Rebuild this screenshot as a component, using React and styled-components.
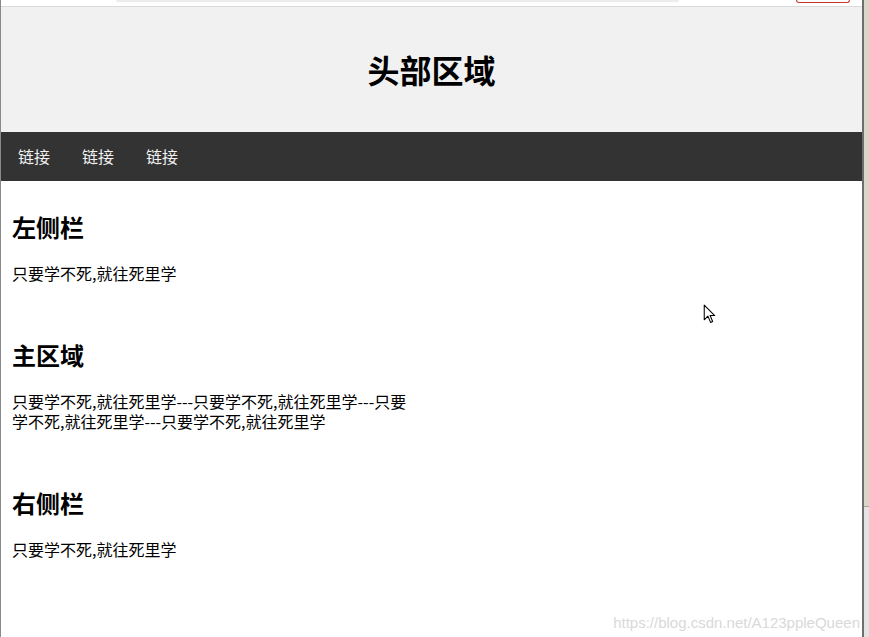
import React from 'react'
import styled, { createGlobalStyle } from 'styled-components'

const GlobalStyle = createGlobalStyle`
  html, body {
    margin: 0;
    padding: 0;
    background: #ffffff;
  }
  body {
    font-family: "Noto Sans CJK SC", "Liberation Sans", sans-serif;
    font-size: 16px;
    color: #000;
    overflow: hidden;
  }
`

const columns = [
  { title: '左侧栏', width: '25%', text: '只要学不死,就往死里学' },
  {
    title: '主区域',
    width: '50%',
    text: '只要学不死,就往死里学---只要学不死,就往死里学---只要学不死,就往死里学---只要学不死,就往死里学'
  },
  { title: '右侧栏', width: '25%', text: '只要学不死,就往死里学' }
]

const App = () => (
  <Screen>
    <GlobalStyle />
    <Window>
      <Chrome>
        <AddressBar />
        <RecordBadge />
      </Chrome>
      <Header>
        <Title>头部区域</Title>
      </Header>
      <TopNav>
        <NavLink href="#">链接</NavLink>
        <NavLink href="#">链接</NavLink>
        <NavLink href="#">链接</NavLink>
      </TopNav>
      <Content>
        {columns.map(col => (
          <Column key={col.title} width={col.width}>
            <ColumnTitle>{col.title}</ColumnTitle>
            <ColumnText>{col.text}</ColumnText>
          </Column>
        ))}
      </Content>
      <Cursor viewBox="0 0 12 19" width="13" height="20">
        <path d="M1 1 L1 15 L4.5 11.5 L7 17.5 L9 16.6 L6.6 11 L11 11 Z" fill="#fff" stroke="#000" strokeWidth="1" strokeLinejoin="round" />
      </Cursor>
      <Watermark>https://blog.csdn.net/A123ppleQueen</Watermark>
    </Window>
    <SideStrip>
      <StripTop />
      <StripBottom />
    </SideStrip>
  </Screen>
)

const Screen = styled.div`
  display: flex;
  width: 869px;
  height: 637px;
  background: #ffffff;
`
const Window = styled.div`
  position: relative;
  flex: 1;
  display: flex;
  flex-direction: column;
  border-left: 1px solid #8a8a8a;
  border-right: 2px solid #6e6e6e;
  background: #ffffff;
`
const Chrome = styled.div`
  display: flex;
  align-items: flex-start;
  height: 6px;
  background: #ffffff;
  border-bottom: 1px solid #dadada;
  overflow: hidden;
`
const AddressBar = styled.div`
  margin-left: 115px;
  width: 563px;
  height: 2px;
  background: #ececec;
  border-radius: 0 0 4px 4px;
`
const RecordBadge = styled.div`
  margin-left: 117px;
  width: 52px;
  height: 2px;
  border: 1px solid #c8372d;
  border-top: none;
  border-radius: 0 0 10px 10px;
`
const Header = styled.header`
  background: #f1f1f1;
  padding: 20px;
  text-align: center;
`
const Title = styled.h1`
  margin: 21px 0;
  font-size: 32px;
  line-height: 43px;
  font-weight: bold;
`
const TopNav = styled.nav`
  display: flex;
  background: #333333;
  padding-left: 1px;
`
const NavLink = styled.a`
  display: block;
  padding: 14px 16px;
  font-size: 16px;
  line-height: 21px;
  color: #f2f2f2;
  text-decoration: none;
`
const Content = styled.main`
  display: flex;
  flex-direction: column;
  padding-left: 1px;
`
const Column = styled.section`
  box-sizing: border-box;
  width: ${props => props.width};
  padding: 10px;
`
const ColumnTitle = styled.h2`
  margin: 20px 0;
  font-size: 24px;
  line-height: 32px;
  font-weight: bold;
`
const ColumnText = styled.p`
  margin: 16px 0;
  font-size: 16px;
  line-height: 20px;
`
const Cursor = styled.svg`
  position: absolute;
  left: 702px;
  top: 304px;
`
const Watermark = styled.div`
  position: absolute;
  right: 2px;
  bottom: 6px;
  font-family: "Liberation Sans", Arial, sans-serif;
  font-size: 15px;
  color: #d9d9d9;
`
const SideStrip = styled.div`
  display: flex;
  flex-direction: column;
  width: 5px;
`
const StripTop = styled.div`
  height: 506px;
  background: #d9d5c8;
  border-bottom: 1px solid #a9a58f;
`
const StripBottom = styled.div`
  flex: 1;
  background: #e3e3e3;
`

export default App
